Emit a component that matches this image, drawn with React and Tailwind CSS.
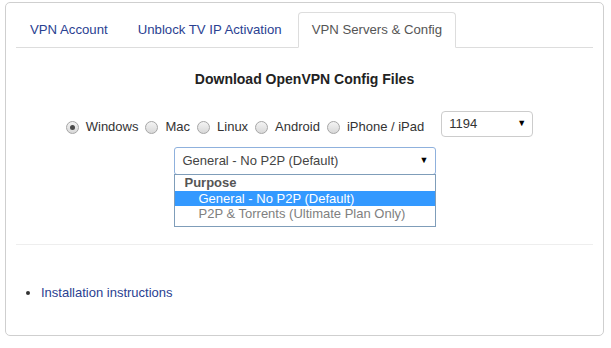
import React, { useState } from "react";

const tabs = ["VPN Account", "Unblock TV IP Activation", "VPN Servers & Config"];

const platforms = ["Windows", "Mac", "Linux", "Android", "iPhone / iPad"];

const Radio = ({ checked }) => (
  <span className="w-[13px] h-[13px] rounded-full border border-[#a6a6a6] bg-gradient-to-b from-[#f4f4f4] to-[#d8d8d8] flex items-center justify-center">
    {checked && <span className="w-[5px] h-[5px] rounded-full bg-[#4a4a4a]" />}
  </span>
);

export default function App() {
  const [active] = useState(2);
  const [platform, setPlatform] = useState("Windows");

  return (
    <div className="w-[611px] h-[348px] bg-white pt-[2px] pl-[5px] font-['Liberation_Sans',Arial,sans-serif] text-[13px] text-[#333]">
      <div className="w-[599px] h-[334px] border border-[#cfcfcf] rounded-[5px] px-[10px] pt-[9px]">
        <ul className="flex border-b border-[#ddd]">
          {tabs.map((tab, i) => (
            <li
              key={i}
              className={`${
                i === active
                  ? "border-[#ddd] border-b-white bg-white text-[#555]"
                  : "border-transparent text-[#2a4191]"
              } h-[36px] -mb-px mr-[2px] px-[13px] flex items-center border rounded-t-[4px] text-[13.2px] cursor-pointer`}
            >
              {tab}
            </li>
          ))}
        </ul>

        <h3 className="mt-[21px] h-[20px] leading-[20px] text-center text-[14px] font-bold text-[#222]">
          Download OpenVPN Config Files
        </h3>

        <div className="mt-[22px] flex justify-center items-center pr-[10px]">
          {platforms.map((p) => (
            <label
              key={p}
              onClick={() => setPlatform(p)}
              className="flex items-center gap-[7px] mr-[7px] pt-[6px] text-[13px] text-[#333] cursor-pointer"
            >
              <Radio checked={platform === p} />
              <span>{p}</span>
            </label>
          ))}
          <div className="ml-[10px] w-[92px] h-[26px] border border-[#ccc] rounded-[4px] flex items-center justify-between pl-[7px] pr-[6px] text-[13px] text-[#333]">
            <span>1194</span>
            <span className="text-[9px] text-black">▼</span>
          </div>
        </div>

        <div className="mt-[10px] flex justify-center">
          <div className="w-[262px]">
            <div className="h-[28px] border border-[#8fb1dd] rounded-[3px] flex items-center justify-between pl-[8px] pr-[6px] text-[13px] text-[#444]">
              <span>General - No P2P (Default)</span>
              <span className="text-[9px] text-black">▼</span>
            </div>
            <div className="-mt-px border border-[#7f9db9] bg-white text-[13px] leading-[16px] pb-[4px]">
              <div className="pl-[10px] font-bold text-[#555]">Purpose</div>
              <div className="pl-[24px] bg-[#3399ff] text-white h-[15px] leading-[15px]">
                General - No P2P (Default)
              </div>
              <div className="pl-[24px] text-[#808080]">P2P &amp; Torrents (Ultimate Plan Only)</div>
            </div>
          </div>
        </div>

        <hr className="mt-[17px] border-t border-[#eee]" />

        <ul className="mt-[38px] pl-[25px] list-disc text-[13px] marker:text-[#333]">
          <li className="text-[#2a4191]">
            <a className="cursor-pointer">Installation instructions</a>
          </li>
        </ul>
      </div>
    </div>
  );
}
